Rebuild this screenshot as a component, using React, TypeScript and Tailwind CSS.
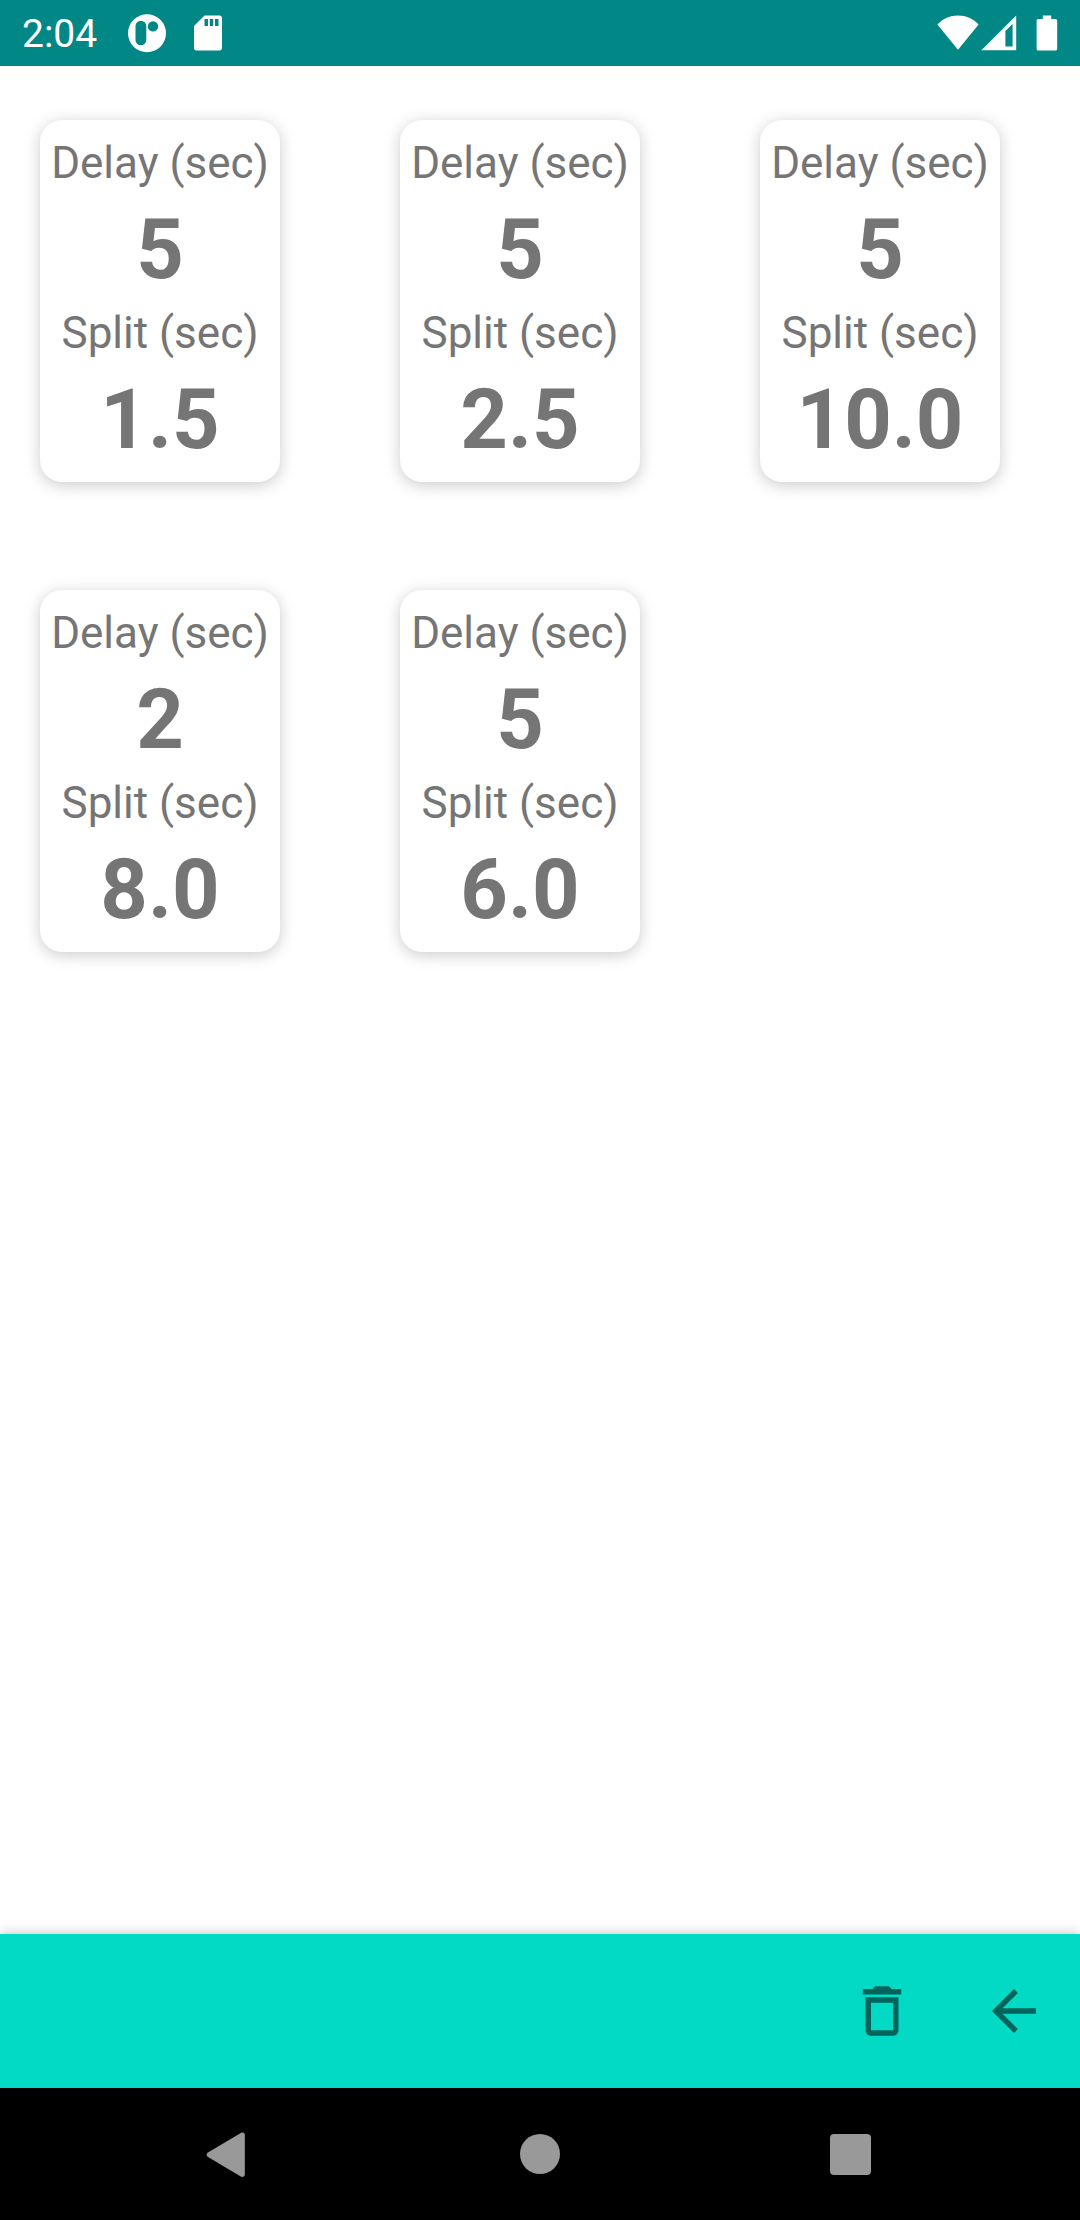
import React from "react";

type Timer = { delay: string; split: string };

const timers: Timer[] = [
  { delay: "5", split: "1.5" },
  { delay: "5", split: "2.5" },
  { delay: "5", split: "10.0" },
  { delay: "2", split: "8.0" },
  { delay: "5", split: "6.0" },
];

function StatusBar() {
  return (
    <header className="flex h-[66px] shrink-0 items-center justify-between bg-[#018786] px-[22px] text-white">
      <div className="flex items-center">
        <span className="pt-0.5 text-[39px] leading-[46px]">2:04</span>
        <svg className="ml-[30px] h-10 w-10" viewBox="0 0 40 40" fill="currentColor" aria-hidden="true">
          <path
            fillRule="evenodd"
            d="M20 1.2a19 19 0 1 0 0 38a19 19 0 1 0 0-38zM13.9 7.7a5.4 5.4 0 0 1 5.4 5.4v13.8a5.4 5.4 0 0 1-10.8 0V13.1a5.4 5.4 0 0 1 5.4-5.4zM26 8.2a5.2 5.2 0 1 1 0 10.4a5.2 5.2 0 1 1 0-10.4z"
          />
        </svg>
        <svg className="ml-5 h-[42px] w-[42px]" viewBox="0 0 24 24" fill="currentColor" aria-hidden="true">
          <path d="M18 2h-8L4.02 8 4 20.6c0 .8.6 1.4 1.4 1.4h13.2c.8 0 1.4-.6 1.4-1.4V3.4c0-.8-.6-1.4-1.4-1.4zm-6 6h-2V4h2v4zm3 0h-2V4h2v4zm3 0h-2V4h2v4z" />
        </svg>
      </div>
      <div className="flex items-center">
        <svg className="h-9 w-[42px]" viewBox="0 0 42 36" fill="currentColor" aria-hidden="true">
          <path d="M.4 9.6C6 3.2 13 .4 21 .4s15 2.8 20.6 9.2L21 34.8z" />
        </svg>
        <svg className="ml-0.5 h-9 w-9" viewBox="0 0 36 36" fill="currentColor" aria-hidden="true">
          <path fillRule="evenodd" d="M35.2 .4v34.8H.4zM24.4 16v15.4h7.2V9z" />
        </svg>
        <svg className="ml-[19px] h-9 w-[22px]" viewBox="0 0 22 36" fill="currentColor" aria-hidden="true">
          <path d="M6.8 .4h8.4v3.6h4.2c1 0 1.8.8 1.8 1.8v28c0 1-.8 1.8-1.8 1.8H2.4c-1 0-1.8-.8-1.8-1.8v-28C.6 4.8 1.4 4 2.4 4h4.4z" />
        </svg>
      </div>
    </header>
  );
}

function TimerCard({ delay, split }: Timer) {
  return (
    <li className="py-[54px] pl-10">
      <dl className="w-[240px] rounded-[22px] bg-white pt-[13px] pb-[9px] text-center text-[#757575] shadow-[0_3px_16px_rgba(0,0,0,0.21)]">
        <dt className="text-[44px] leading-[60px] whitespace-nowrap">Delay (sec)</dt>
        <dd className="mt-1 text-[83px] leading-[106px] font-bold">{delay}</dd>
        <dt className="text-[44px] leading-[60px] whitespace-nowrap">Split (sec)</dt>
        <dd className="mt-1 text-[83px] leading-[106px] font-bold">{split}</dd>
      </dl>
    </li>
  );
}

function ActionBar() {
  return (
    <div className="relative flex h-[154px] shrink-0 items-center justify-end bg-[#03dac5] text-[#02645a] shadow-[0_0_12px_rgba(0,0,0,0.25)]">
      <button type="button" aria-label="Delete" className="flex h-[132px] w-[132px] items-center justify-center">
        <svg className="h-[66px] w-[66px]" viewBox="0 0 24 24" fill="currentColor" aria-hidden="true">
          <path d="M15.5 4l-1-1h-5l-1 1H5v2h14V4zM6 19c0 1.1.9 2 2 2h8c1.1 0 2-.9 2-2V7H6v12zM8 9h8v10H8V9z" />
        </svg>
      </button>
      <button type="button" aria-label="Back" className="flex h-[132px] w-[132px] items-center justify-center">
        <svg className="h-[66px] w-[66px]" viewBox="0 0 24 24" fill="currentColor" aria-hidden="true">
          <path d="M20 11H7.83l5.59-5.59L12 4l-8 8 8 8 1.41-1.41L7.83 13H20v-2z" />
        </svg>
      </button>
    </div>
  );
}

function NavigationBar() {
  return (
    <nav className="relative flex h-[132px] shrink-0 items-center bg-black px-[74px] text-[#999999]">
      <button type="button" aria-label="System back" className="flex h-full flex-1 items-center justify-center">
        <svg className="h-12 w-12" viewBox="0 0 48 48" fill="currentColor" aria-hidden="true">
          <path d="M39.8 5v39.6c0 2.2-2.2 3-4 2L3 27c-1.8-1.1-1.8-3.3 0-4.4L35.8 3c1.8-1 4-.2 4 2z" />
        </svg>
      </button>
      <button type="button" aria-label="Home" className="flex h-full flex-1 items-center justify-center">
        <span className="h-10 w-10 rounded-full bg-[#999999]" />
      </button>
      <button type="button" aria-label="Recent apps" className="flex h-full flex-1 items-center justify-center">
        <span className="h-[41px] w-[41px] rounded-[4px] bg-[#999999]" />
      </button>
    </nav>
  );
}

export default function App() {
  return (
    <div className="flex min-h-screen flex-col bg-white font-[Roboto,sans-serif]">
      <StatusBar />
      <main className="flex-1">
        <ul className="grid grid-cols-3">
          {timers.map((timer, index) => (
            <TimerCard key={index} {...timer} />
          ))}
        </ul>
      </main>
      <ActionBar />
      <NavigationBar />
    </div>
  );
}
